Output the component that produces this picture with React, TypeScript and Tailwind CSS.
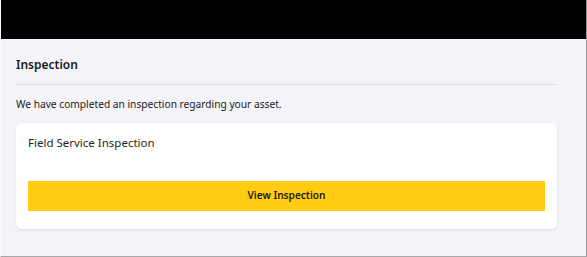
import React from "react";

export default function App() {
  return (
    <div
      className="w-[587px] h-[257px] flex flex-col bg-[#f4f4f8] border-r border-b border-r-[#9a9a9a] border-b-[#a8a8a8] border-l border-l-[#fafafc] overflow-hidden"
      style={{ fontFamily: '"Noto Sans", "Open Sans", sans-serif' }}
    >
      <div className="h-[39px] bg-black shrink-0" />
      <div className="pl-[15px] pr-[29px] flex flex-col">
        <div className="pt-[16px] pb-[9px] border-b border-[#dde1e6]">
          <h2 className="text-[12px] font-semibold leading-[20px] text-[#1a1a1a]">Inspection</h2>
        </div>
        <p className="mt-[11px] text-[10.2px] leading-[16px] text-[#1a1a1a]">
          We have completed an inspection regarding your asset.
        </p>
        <div className="mt-[11px] bg-white rounded-[6px] shadow-[0_1px_3px_rgba(0,0,0,0.10)] px-[12px] pt-[11px] pb-[18px] flex flex-col">
          <div className="text-[11.5px] leading-[18px] text-[#1f1f1f]">Field Service Inspection</div>
          <button className="mt-[29px] h-[30px] w-full bg-[#ffcc11] text-[10.1px] font-semibold text-[#1a1a1a] flex items-center justify-center">
            View Inspection
          </button>
        </div>
      </div>
    </div>
  );
}
